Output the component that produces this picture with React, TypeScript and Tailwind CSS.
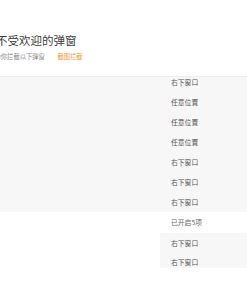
import React from "react";

const rows1 = ["右下窗口", "任意位置", "任意位置", "任意位置", "右下窗口", "右下窗口", "右下窗口"];

export default function App() {
  return (
    <div
      className="w-[247px] h-[296px] overflow-hidden bg-white relative"
      style={{ fontFamily: '"Noto Sans CJK SC", "Noto Sans", sans-serif' }}
    >
      {/* header */}
      <div className="h-[76px] flex flex-col pt-[32px] ml-[-4px]">
        <div className="text-[11.5px] leading-[16px] text-[#404040] whitespace-nowrap">不受欢迎的弹窗</div>
        <div className="mt-[3px] flex items-center gap-[12.5px] text-[6.3px] leading-[12px] whitespace-nowrap">
          <span className="text-[#8a8a8a] ml-[-1.5px]">为你拦截以下弹窗</span>
          <span className="text-[#f29a3a]">截图拦截</span>
        </div>
      </div>
      {/* panel 1 */}
      <div className="border-t border-[#ededed] bg-[#f7f7f7] flex flex-col">
        {rows1.map((r, i) => (
          <div
            key={i}
            className={`h-5 flex items-center pl-[171px] text-[6.8px] text-[#555] whitespace-nowrap ${i === 0 ? "mt-[-5px]" : ""}`}
          >
            {r}
          </div>
        ))}
      </div>
      {/* white row */}
      <div className="h-[21px] flex items-center pl-[171px] text-[6.8px] text-[#666] whitespace-nowrap">已开启5项</div>
      {/* panel 2 */}
      <div className="flex">
        <div className="w-[160px] h-[35px] bg-white" />
        <div className="flex-1 h-[35px] bg-[#f7f7f7] flex flex-col overflow-hidden">
          {["右下窗口", "右下窗口"].map((r, i) => (
            <div key={i} className={`h-5 shrink-0 flex items-center pl-[11px] text-[6.8px] text-[#555] whitespace-nowrap ${i === 0 ? "mt-[0px]" : "mt-[-1px]"}`}>
              {r}
            </div>
          ))}
        </div>
      </div>
    </div>
  );
}
